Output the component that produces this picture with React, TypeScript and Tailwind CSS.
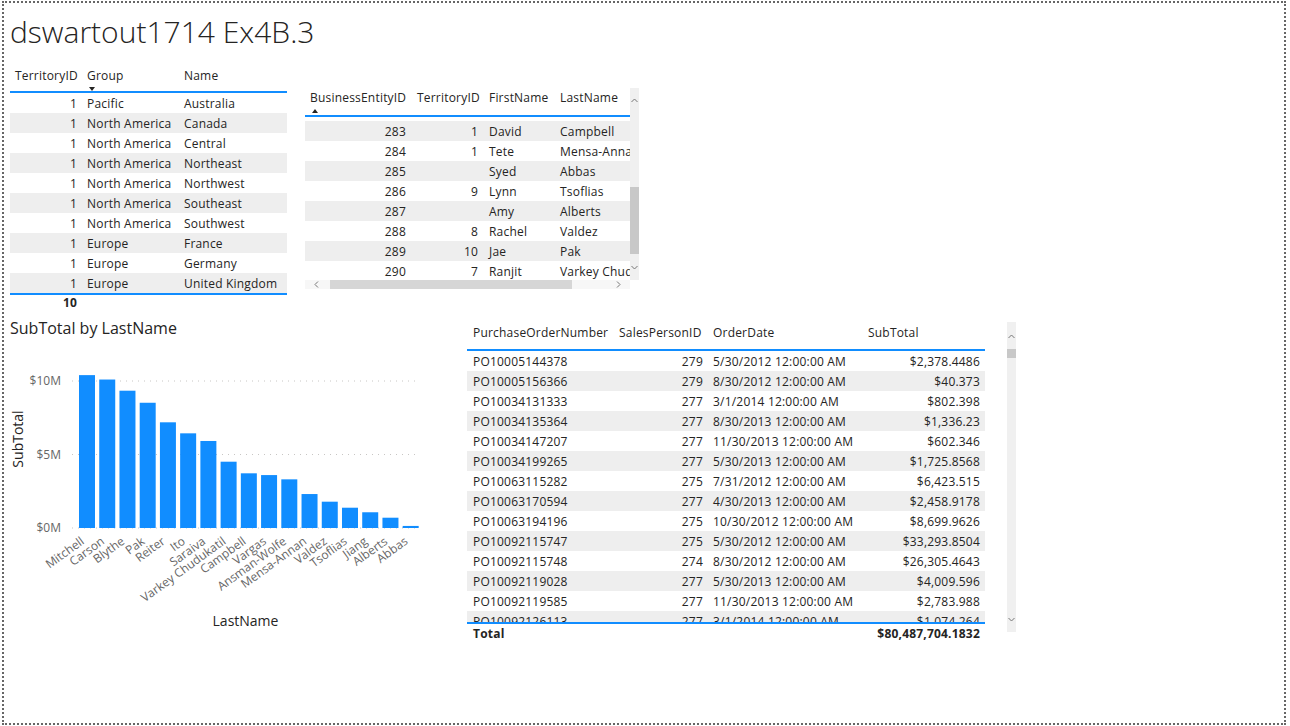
import React from "react";

const territory: [string, string][] = [
  ["Pacific", "Australia"],
  ["North America", "Canada"],
  ["North America", "Central"],
  ["North America", "Northeast"],
  ["North America", "Northwest"],
  ["North America", "Southeast"],
  ["North America", "Southwest"],
  ["Europe", "France"],
  ["Europe", "Germany"],
  ["Europe", "United Kingdom"],
];

const people: [string, string, string, string][] = [
  ["283", "1", "David", "Campbell"],
  ["284", "1", "Tete", "Mensa-Annan"],
  ["285", "", "Syed", "Abbas"],
  ["286", "9", "Lynn", "Tsoflias"],
  ["287", "", "Amy", "Alberts"],
  ["288", "8", "Rachel", "Valdez"],
  ["289", "10", "Jae", "Pak"],
  ["290", "7", "Ranjit", "Varkey Chudukatil"],
];

const orders: [string, string, string, string][] = [
  ["PO10005144378", "279", "5/30/2012 12:00:00 AM", "$2,378.4486"],
  ["PO10005156366", "279", "8/30/2012 12:00:00 AM", "$40.373"],
  ["PO10034131333", "277", "3/1/2014 12:00:00 AM", "$802.398"],
  ["PO10034135364", "277", "8/30/2013 12:00:00 AM", "$1,336.23"],
  ["PO10034147207", "277", "11/30/2013 12:00:00 AM", "$602.346"],
  ["PO10034199265", "277", "5/30/2013 12:00:00 AM", "$1,725.8568"],
  ["PO10063115282", "275", "7/31/2012 12:00:00 AM", "$6,423.515"],
  ["PO10063170594", "277", "4/30/2013 12:00:00 AM", "$2,458.9178"],
  ["PO10063194196", "275", "10/30/2012 12:00:00 AM", "$8,699.9626"],
  ["PO10092115747", "275", "5/30/2012 12:00:00 AM", "$33,293.8504"],
  ["PO10092115748", "274", "8/30/2012 12:00:00 AM", "$26,305.4643"],
  ["PO10092119028", "277", "5/30/2013 12:00:00 AM", "$4,009.596"],
  ["PO10092119585", "277", "11/30/2013 12:00:00 AM", "$2,783.988"],
  ["PO10092126113", "277", "3/1/2014 12:00:00 AM", "$1,074.264"],
];

const bars: [string, number][] = [
  ["Mitchell", 10.4],
  ["Carson", 10.1],
  ["Blythe", 9.34],
  ["Pak", 8.52],
  ["Reiter", 7.19],
  ["Ito", 6.44],
  ["Saraiva", 5.92],
  ["Varkey Chudukatil", 4.51],
  ["Campbell", 3.72],
  ["Vargas", 3.6],
  ["Ansman-Wolfe", 3.31],
  ["Mensa-Annan", 2.31],
  ["Valdez", 1.79],
  ["Tsoflias", 1.38],
  ["Jiang", 1.07],
  ["Alberts", 0.7],
  ["Abbas", 0.14],
];

function Chevron({ dir }: { dir: "up" | "down" | "left" | "right" }) {
  const pts =
    dir === "up"
      ? "0.5,4 3.5,1 6.5,4"
      : dir === "down"
      ? "0.5,1 3.5,4 6.5,1"
      : dir === "left"
      ? "4,0.5 1,3.5 4,6.5"
      : "1,0.5 4,3.5 1,6.5";
  const w = dir === "up" || dir === "down" ? 7 : 5;
  const h = dir === "up" || dir === "down" ? 5 : 7;
  return (
    <svg width={w} height={h} viewBox={`0 0 ${w} ${h}`} className="block shrink-0">
      <polyline points={pts} fill="none" stroke="#777" strokeWidth="1" />
    </svg>
  );
}

function TerritoryTable() {
  return (
    <div className="w-[277px] text-[12px] leading-[16px] tracking-[0.2px] text-[#252423]">
      <div className="grid grid-cols-[72px_97px_108px] h-[28px] border-b-2 border-[#118dff]">
        <div className="pl-[5px] pt-[3px]">TerritoryID</div>
        <div className="pl-[5px] pt-[3px] flex flex-col">
          <span>Group</span>
          <span className="mt-[3px] ml-[2px] w-0 h-0 border-l-[3px] border-r-[3px] border-t-[4px] border-l-transparent border-r-transparent border-t-[#252423]" />
        </div>
        <div className="pl-[5px] pt-[3px]">Name</div>
      </div>
      {territory.map(([g, n], i) => (
        <div
          key={n}
          className={`grid grid-cols-[72px_97px_108px] h-[20px] pt-[2px] items-center ${
            i % 2 === 1 ? "bg-[#eeeeee]" : "bg-white"
          }`}
        >
          <div className="pr-[5px] text-right">1</div>
          <div className="pl-[5px] whitespace-nowrap">{g}</div>
          <div className="pl-[5px] whitespace-nowrap">{n}</div>
        </div>
      ))}
      <div className="grid grid-cols-[72px_97px_108px] h-[18px] border-t-2 border-[#118dff] font-bold">
        <div className="pr-[5px] text-right">10</div>
        <div />
        <div />
      </div>
    </div>
  );
}

function PersonTable() {
  return (
    <div className="flex flex-col text-[12px] leading-[16px] tracking-[0.2px] text-[#252423]">
      <div className="flex">
        <div className="w-[325px] h-[192px] overflow-hidden">
          <div className="grid grid-cols-[106px_72px_72px_75px] h-[29px] border-b-2 border-[#118dff]">
            <div className="pl-[5px] pt-[2px] flex flex-col">
              <span className="whitespace-nowrap">BusinessEntityID</span>
              <span className="mt-[3px] ml-[2px] w-0 h-0 border-l-[3px] border-r-[3px] border-b-[4px] border-l-transparent border-r-transparent border-b-[#252423]" />
            </div>
            <div className="pl-[6px] pt-[2px] whitespace-nowrap">TerritoryID</div>
            <div className="pl-[6px] pt-[2px] whitespace-nowrap">FirstName</div>
            <div className="pl-[5px] pt-[2px] whitespace-nowrap">LastName</div>
          </div>
          <div className="h-[4px] bg-white" />
          {people.map(([id, t, f, l], i) => (
            <div
              key={id}
              className={`grid grid-cols-[106px_72px_72px_75px] h-[20px] pt-[2px] items-center ${
                i % 2 === 0 ? "bg-[#eeeeee]" : "bg-white"
              }`}
            >
              <div className="pr-[5px] text-right">{id}</div>
              <div className="pr-[5px] text-right">{t}</div>
              <div className="pl-[6px] whitespace-nowrap">{f}</div>
              <div className="pl-[5px] whitespace-nowrap overflow-hidden">{l}</div>
            </div>
          ))}
        </div>
        <div className="w-[9px] h-[192px] bg-[#f0f0f0] flex flex-col items-center">
          <div className="mt-[10px]">
            <Chevron dir="up" />
          </div>
          <div className="mt-[84px] w-[9px] h-[67px] bg-[#c8c8c8]" />
          <div className="mt-[11px]">
            <Chevron dir="down" />
          </div>
        </div>
      </div>
      <div className="w-[325px] h-[9px] bg-[#f7f7f7] flex items-center">
        <div className="ml-[9px]">
          <Chevron dir="left" />
        </div>
        <div className="ml-[11px] w-[242px] h-[9px] bg-[#d6d6d6]" />
        <div className="ml-[44px]">
          <Chevron dir="right" />
        </div>
      </div>
    </div>
  );
}

function OrderTable() {
  return (
    <div className="flex text-[12px] leading-[16px] tracking-[0.2px] text-[#252423]">
      <div className="w-[518px]">
        <div className="grid grid-cols-[146px_95px_154px_123px] h-[29px] border-b-2 border-[#118dff]">
          <div className="pl-[6px] pt-[3px] whitespace-nowrap">PurchaseOrderNumber</div>
          <div className="pl-[6px] pt-[3px] whitespace-nowrap">SalesPersonID</div>
          <div className="pl-[5px] pt-[3px] whitespace-nowrap">OrderDate</div>
          <div className="pl-[6px] pt-[3px] whitespace-nowrap">SubTotal</div>
        </div>
        <div className="h-[271px] overflow-hidden">
          {orders.map(([po, sp, d, s], i) => (
            <div
              key={po}
              className={`grid grid-cols-[146px_95px_154px_123px] h-[20px] pt-[2px] items-center ${
                i % 2 === 1 ? "bg-[#eeeeee]" : "bg-white"
              }`}
            >
              <div className="pl-[6px] whitespace-nowrap">{po}</div>
              <div className="pr-[5px] text-right">{sp}</div>
              <div className="pl-[5px] whitespace-nowrap">{d}</div>
              <div className="pr-[5px] text-right whitespace-nowrap">{s}</div>
            </div>
          ))}
        </div>
        <div className="grid grid-cols-[146px_95px_154px_123px] h-[20px] pt-[1px] border-t-2 border-[#118dff] font-bold items-center">
          <div className="pl-[6px]">Total</div>
          <div />
          <div />
          <div className="pr-[5px] text-right whitespace-nowrap">$80,487,704.1832</div>
        </div>
      </div>
      <div className="ml-[22px] w-[9px] h-[310px] bg-[#f0f0f0] flex flex-col items-center">
        <div className="mt-[12px]">
          <Chevron dir="up" />
        </div>
        <div className="mt-[10px] w-[9px] h-[9px] bg-[#c8c8c8]" />
        <div className="mt-[259px]">
          <Chevron dir="down" />
        </div>
      </div>
    </div>
  );
}

function Chart() {
  const base = 188;
  const scale = 14.7;
  const pitch = 20.23;
  return (
    <div className="w-[440px]">
      <div className="text-[16px] leading-[24px] text-[#252423] whitespace-nowrap">SubTotal by LastName</div>
      <svg width="440" height="300" className="block" fontFamily="'Open Sans', sans-serif">
        {[41, 114.5, 188].map((y) => (
          <line key={y} x1="62" x2="410" y1={y} y2={y} stroke="#c8c6c4" strokeWidth="1" strokeDasharray="1 5" />
        ))}
        {[
          ["$10M", 41],
          ["$5M", 114.5],
          ["$0M", 188],
        ].map(([t, y]) => (
          <text key={t as string} x="51" y={y as number} dy="0.35em" textAnchor="end" fontSize="12" fill="#666666">
            {t}
          </text>
        ))}
        <text
          x="8.5"
          y="99"
          dy="0.35em"
          textAnchor="middle"
          fontSize="14"
          fill="#252423"
          transform="rotate(-90 8.5 99)"
        >
          SubTotal
        </text>
        {bars.map(([n, v], i) => {
          const x = 69 + i * pitch;
          const h = v * scale;
          return <rect key={n} x={x} y={base - h} width="16" height={h} fill="#118dff" />;
        })}
        {bars.map(([n], i) => {
          const cx = 69 + i * pitch + 8;
          const ax = cx - 2;
          const ay = 203;
          return (
            <text
              key={n}
              x={ax}
              y={ay}
              textAnchor="end"
              fontSize="12"
              fill="#666666"
              transform={`rotate(-36 ${ax} ${ay})`}
            >
              {n}
            </text>
          );
        })}
        <text x="235.5" y="280.7" dy="0.35em" textAnchor="middle" fontSize="14" fill="#252423">
          LastName
        </text>
      </svg>
    </div>
  );
}

export default function App() {
  return (
    <div className="w-[1290px] h-[726px] bg-white pt-[1px] pl-[2px] font-['Open_Sans',sans-serif] overflow-hidden">
      <div className="w-[1284px] h-[724px] border-2 border-dotted border-[#666666]">
        <div className="h-[62px] pl-[6px] pt-[9px]">
          <div className="text-[30px] leading-[40px] font-light text-[#252423] whitespace-nowrap">
            dswartout1714 Ex4B.3
          </div>
        </div>
        <div className="flex h-[251px]">
          <div className="ml-[6px]">
            <TerritoryTable />
          </div>
          <div className="ml-[18px] mt-[23px]">
            <PersonTable />
          </div>
        </div>
        <div className="flex">
          <div className="ml-[6px]">
            <Chart />
          </div>
          <div className="ml-[17px] mt-[6px]">
            <OrderTable />
          </div>
        </div>
      </div>
    </div>
  );
}
